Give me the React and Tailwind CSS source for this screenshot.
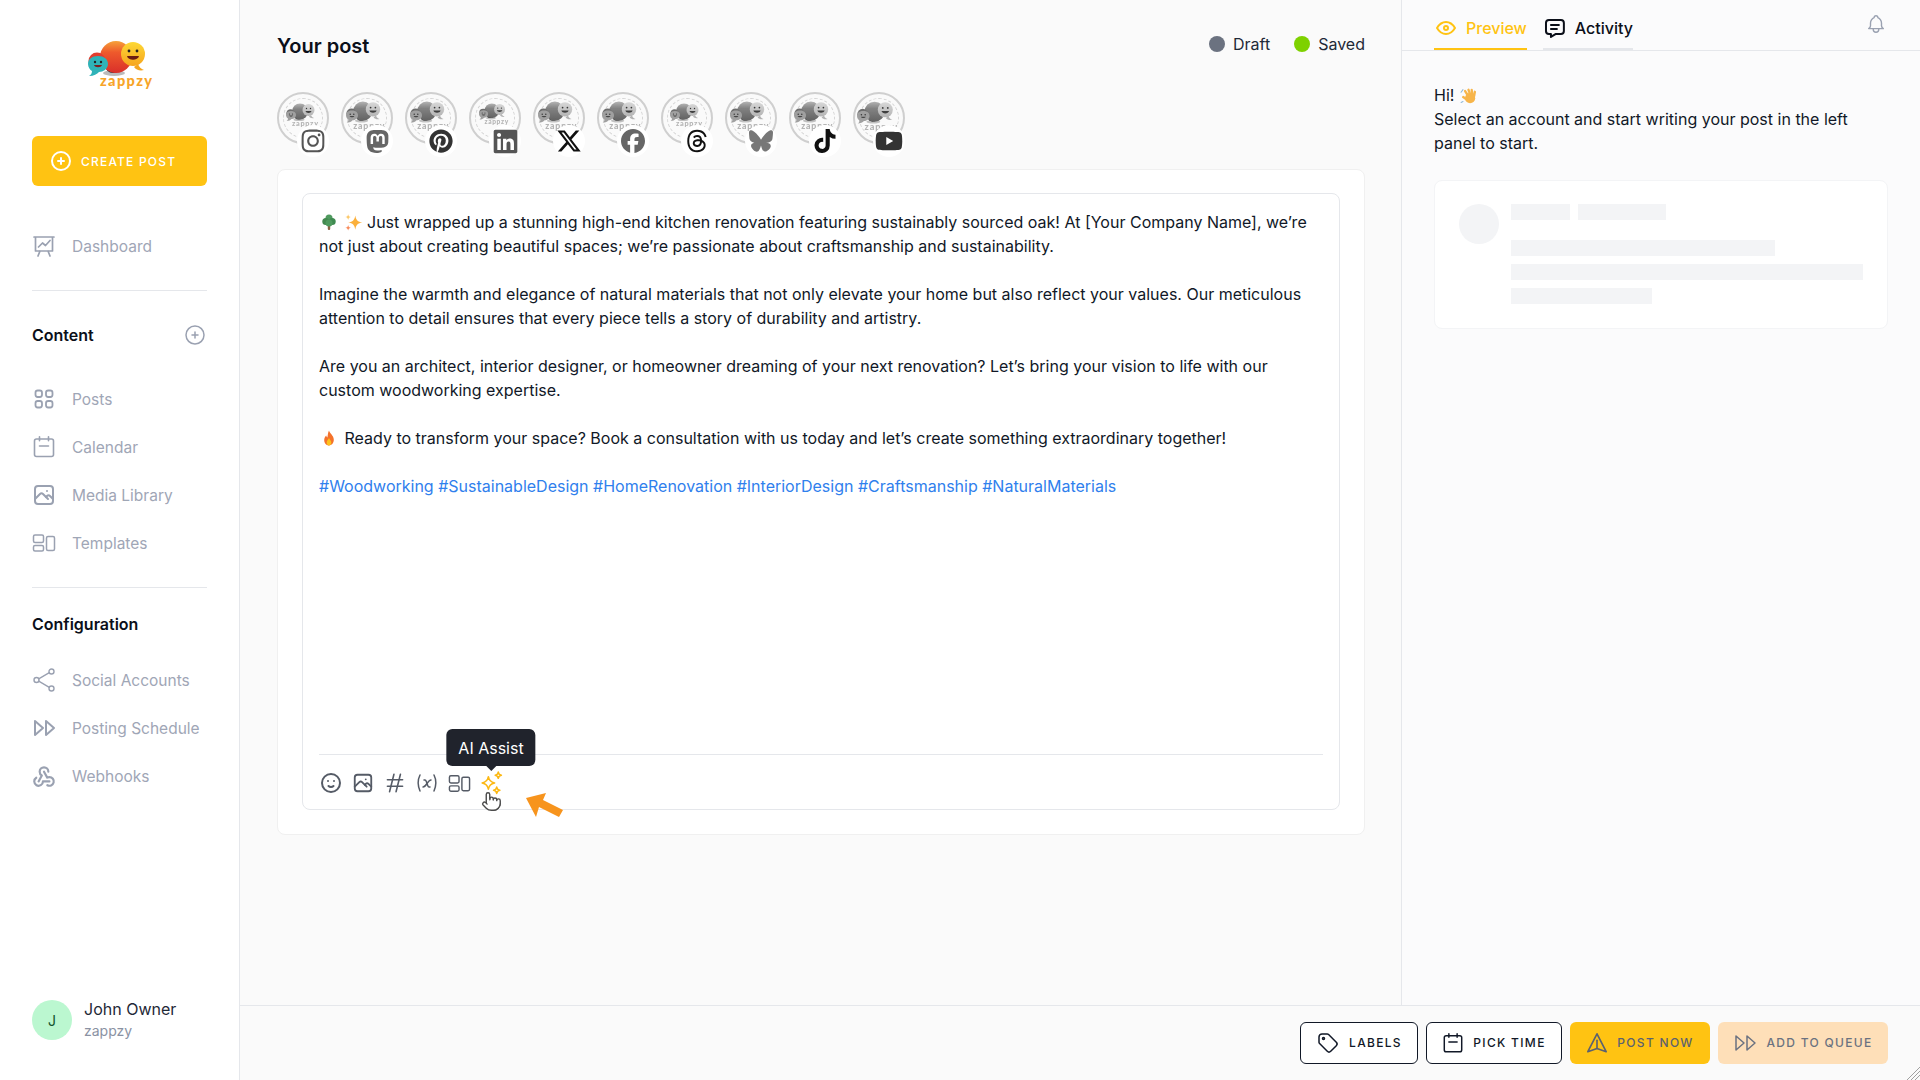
import {
  TbPhoto, TbPlayerTrackNext, TbWebhook,
  TbMoodSmile, TbHash, TbVariable, TbMessage, TbBell, TbEye, TbCirclePlus, TbTag,
} from 'react-icons/tb';
import { FaInstagram, FaPinterest, FaLinkedin, FaXTwitter, FaFacebook, FaThreads, FaBluesky, FaTiktok, FaYoutube } from 'react-icons/fa6';
import { SiMastodon } from 'react-icons/si';
import { Pointer } from 'lucide-react';

function Logo({ className }) {
  return (
    <svg viewBox="0 0 70 52" className={className}>
      <defs>
        <linearGradient id="zbig" x1="0" y1="0" x2="0" y2="1">
          <stop offset="0" stopColor="#f6a23a" />
          <stop offset="0.35" stopColor="#ee5a2c" />
          <stop offset="1" stopColor="#d92f2a" />
        </linearGradient>
        <linearGradient id="zyellow" x1="0" y1="0" x2="0" y2="1">
          <stop offset="0" stopColor="#fdd835" />
          <stop offset="1" stopColor="#f6a51e" />
        </linearGradient>
      </defs>
      <ellipse cx="26" cy="33" rx="11" ry="3" fill="#bbb" />
      <circle cx="25" cy="25" r="8" fill="#2b2b33" />
      <circle cx="28" cy="17" r="16" fill="url(#zbig)" />
      <circle cx="9" cy="21" r="8.5" fill="#e23d2f" />
      <path d="M0 24c0-5 4-8 10-8s10 3 10 8-5 8-9 8c-2 2-5 4-10 4 2-1 3-3 3-5-2-1-4-4-4-7z" fill="#2fb3b8" />
      <circle cx="7" cy="22" r="1.2" fill="#222" />
      <circle cx="13" cy="22" r="1.2" fill="#222" />
      <path d="M6 25h8c-1 3-7 3-8 0z" fill="#7a1f1f" />
      <path d="M50 24c1 3 3 5 6 6-4 1-8 0-10-3z" fill="#f4a51f" />
      <circle cx="45" cy="14" r="12" fill="url(#zyellow)" />
      <circle cx="41" cy="11" r="1.4" fill="#222" />
      <circle cx="49" cy="11" r="1.4" fill="#222" />
      <path d="M39 16h12c-1 5-11 5-12 0z" fill="#6b1b12" />
      <text x="12" y="46" fontFamily="Lato, sans-serif" fontWeight="900" fontSize="14.5" letterSpacing="1.4" fill="#f7a428">zappzy</text>
    </svg>
  );
}

function DashboardIcon({ className }) {
  return (
    <svg viewBox="0 0 24 24" fill="none" stroke="currentColor" strokeWidth="1.7" strokeLinecap="round" strokeLinejoin="round" className={className}>
      <path d="M2 3h20M3.500 3v14h17V3M8 17l-2 5M16 17l2 5M6.500 13l4-4 3 2.500 4.500-5" />
    </svg>
  );
}

function PostsIcon({ className }) {
  return (
    <svg viewBox="0 0 24 24" fill="none" stroke="currentColor" strokeWidth="1.8" className={className}>
      <rect x="3.500" y="3.500" width="6.500" height="6.500" rx="2.200" />
      <rect x="14" y="3.500" width="6.500" height="6.500" rx="2.200" />
      <rect x="3.500" y="14" width="6.500" height="6.500" rx="2.200" />
      <rect x="14" y="14" width="6.500" height="6.500" rx="2.200" />
    </svg>
  );
}

function ShareIcon({ className }) {
  return (
    <svg viewBox="0 0 24 24" fill="none" stroke="currentColor" strokeWidth="1.4" className={className}>
      <circle cx="4.500" cy="12" r="2.500" />
      <circle cx="19.500" cy="3.500" r="2.500" />
      <circle cx="19.500" cy="20.500" r="2.500" />
      <path d="M6.700 10.800 17.300 4.700M6.700 13.200l10.600 6.100" />
    </svg>
  );
}

function WebhookIcon() {
  return <TbWebhook className="w-[26px] h-[26px] -ml-[1px] text-[#9aa1b1]" />;
}

function CalendarIcon({ className }) {
  return (
    <svg viewBox="0 0 24 24" fill="none" stroke="currentColor" strokeWidth="1.6" strokeLinecap="round" strokeLinejoin="round" className={className}>
      <rect x="2.500" y="4" width="19" height="17.500" rx="2" />
      <path d="M7.500 1.800v4M16.500 1.800v4M7.500 11h9" />
    </svg>
  );
}

function TemplateIcon({ className }) {
  return (
    <svg viewBox="0 0 24 24" fill="none" stroke="currentColor" strokeWidth="1.5" strokeLinejoin="round" className={className}>
      <rect x="1.500" y="4" width="10" height="7.500" rx="1.500" />
      <rect x="1.500" y="14.500" width="10" height="5.500" rx="1.500" />
      <rect x="14.500" y="5.500" width="8" height="14" rx="1.500" />
    </svg>
  );
}

function SendIcon({ className }) {
  return (
    <svg viewBox="0 0 24 24" fill="none" stroke="currentColor" strokeWidth="1.8" strokeLinejoin="round" strokeLinecap="round" className={className}>
      <path d="M12 2 22 21.500 12 18 2 21.500z" />
      <path d="M12 9v9" />
    </svg>
  );
}

function Sparkles({ className }) {
  return (
    <svg viewBox="0 0 24 24" fill="none" stroke="#fcb813" strokeWidth="1.500" strokeLinejoin="round" className={className}>
      <path d="M9 5.500c.6 3.600 2.200 5.400 6 6-3.800.6-5.400 2.400-6 6-.6-3.600-2.200-5.400-6-6 3.800-.6 5.400-2.400 6-6z" />
      <path d="M18.500 1c.3 1.900 1.100 2.700 3 3-1.900.3-2.700 1.100-3 3-.3-1.900-1.100-2.700-3-3 1.900-.3 2.700-1.100 3-3z" />
      <path d="M17 15.500c.3 1.900 1.100 2.700 3 3-1.900.3-2.700 1.100-3 3-.3-1.900-1.100-2.700-3-3 1.900-.3 2.700-1.100 3-3z" />
    </svg>
  );
}

// small colour drawings standing in for the emoji of the post
function TreeEmoji() {
  return (
    <svg viewBox="0 0 16 16" className="inline-block mx-[2px] w-[16px] h-[16px] align-[-2px]">
      <rect x="6.800" y="10" width="2.400" height="6" rx="1" fill="#8a6242" />
      <circle cx="8" cy="4" r="3.500" fill="#4f9a5e" />
      <circle cx="4.800" cy="7.500" r="3.500" fill="#43894f" />
      <circle cx="11.200" cy="7.500" r="3.500" fill="#3f8a50" />
      <circle cx="8" cy="9" r="3.500" fill="#4f9a5e" />
    </svg>
  );
}

function SparkleEmoji() {
  return (
    <svg viewBox="0 0 16 16" className="inline-block w-[19px] h-[19px] align-[-4px]">
      <path d="M9.500 2c.7 4 2 5.300 6 6-4 .7-5.300 2-6 6-.7-4-2-5.300-6-6 4-.7 5.300-2 6-6z" fill="#fbb03b" />
      <path d="M3.500 1c.3 1.500.9 2.100 2.400 2.400-1.500.3-2.100.9-2.400 2.400-.3-1.500-.9-2.100-2.400-2.400C2.600 3.100 3.200 2.500 3.500 1z" fill="#fcc96b" />
      <path d="M3.500 10c.3 1.500.9 2.100 2.400 2.400-1.500.3-2.100.9-2.400 2.400-.3-1.500-.9-2.100-2.400-2.400 1.500-.3 2.100-.9 2.400-2.400z" fill="#f98d5e" />
    </svg>
  );
}

function FireEmoji() {
  return (
    <svg viewBox="0 0 16 16" className="inline-block ml-[2px] mr-[3px] w-[16px] h-[16px] align-[-2px]">
      <path d="M8 .5c.5 3 4.800 4.800 4.800 9.300 0 3.500-2.300 5.700-4.800 5.700s-4.800-2.200-4.800-5.500c0-2.200 1.200-3.500 2-4.500.2 1 .6 1.700 1.200 2C6.800 5 7 2.500 8 .5z" fill="#f4722b" />
      <path d="M8 8c.3 1.500 2.300 2.500 2.300 4.500 0 1.700-1 3-2.300 3s-2.300-1.300-2.300-3C5.700 10.500 7.500 9.500 8 8z" fill="#fcc21b" />
    </svg>
  );
}

function WaveEmoji() {
  return (
    <svg viewBox="0 0 16 16" className="inline-block ml-[1px] w-[17px] h-[17px] align-[-3px]">
      <circle cx="9.500" cy="10.500" r="4.800" fill="#f7b54a" />
      <path d="M7.500 8 4.800 3.800M9.500 7 8 2.600M11.500 7 11 2.800M13.300 8.500 14 4.500M6 11.500 3 9.500" stroke="#f7b54a" strokeWidth="2.200" fill="none" strokeLinecap="round" />
      <path d="M1 5 2.800 2.500M1 14.500l1.800-.8" stroke="#8fb8d8" strokeWidth="1" fill="none" strokeLinecap="round" />
    </svg>
  );
}

function NavItem({ icon: Icon, label }) {
  return (
    <div className="flex items-center h-[48px] text-[#9fa6b6]">
      <div className="w-[40px] flex-shrink-0"><Icon className="w-[24px] h-[24px] text-[#9aa1b1]" /></div>
      <span className="text-[15.5px] leading-none pt-[2px]">{label}</span>
    </div>
  );
}

const accounts = [
  { icon: FaInstagram, color: 'text-[#555555]', logo: 'w-[35px] mt-[-4px]', size: 'text-[26px]' },
  { icon: SiMastodon, color: 'text-[#666666]', logo: 'w-[42px] mt-[-2px]', size: 'text-[23px]' },
  { icon: FaPinterest, color: 'text-[#333333]', logo: 'w-[42px] mt-[-2px]', size: 'text-[24px]' },
  { icon: FaLinkedin, color: 'text-[#555555]', logo: 'w-[32px] mt-[-6px]', size: 'text-[27px]' },
  { icon: FaXTwitter, color: 'text-[#111111]', logo: 'w-[42px] mt-[-2px]', size: 'text-[26px]' },
  { icon: FaFacebook, color: 'text-[#666666]', logo: 'w-[42px] mt-[-2px]', size: 'text-[24px]' },
  { icon: FaThreads, color: 'text-[#111111]', logo: 'w-[35px] mt-[-4px]', size: 'text-[24px]' },
  { icon: FaBluesky, color: 'text-[#777777]', logo: 'w-[42px] mt-[-2px]', size: 'text-[24px]' },
  { icon: FaTiktok, color: 'text-[#111111]', logo: 'w-[42px] mt-[-2px]', size: 'text-[24px]' },
  { icon: FaYoutube, color: 'text-[#333333]', logo: 'w-[44px] mt-[-2px]', size: 'text-[28px]' },
];

function Account({ icon: Icon, color, logo, size }) {
  return (
    <div className="relative w-[52px] h-[52px] rounded-full border-2 border-[#cfcfcf] flex items-center justify-center">
      <div className="absolute inset-[4px] rounded-full border border-dashed border-[#d5d5d5]" />
      <Logo className={`${logo} grayscale opacity-90`} />
      <div className={`absolute left-[18px] top-[31px] w-[32px] h-[32px] rounded-full bg-white flex items-center justify-center ${color} ${size}`}>
        <Icon />
      </div>
    </div>
  );
}

function FooterButton({ className, children }) {
  return (
    <div className={`h-[42px] rounded-[6px] flex items-center justify-center gap-[9px] text-[12px] font-medium tracking-[0.11em] ${className}`}>
      {children}
    </div>
  );
}

export default function App() {
  return (
    <div className="h-screen w-full flex bg-[#fafafa] text-[#111827] overflow-hidden font-['Inter',sans-serif]">
      {/* Sidebar */}
      <aside className="w-[240px] flex-shrink-0 bg-white border-r border-[#e5e7eb] px-[32px] flex flex-col">
        <div className="pt-[40px] h-[136px] flex justify-center">
          <Logo className="w-[70px] h-[52px] ml-[6px]" />
        </div>
        <div className="h-[50px] rounded-[6px] bg-[#ffc312] flex items-center pl-[17px] text-white flex-shrink-0">
          <TbCirclePlus className="w-[24px] h-[24px]" />
          <span className="ml-[8px] pt-[1px] text-[12px] font-medium tracking-[0.1em]">CREATE POST</span>
        </div>
        <div className="mt-[36px]"><NavItem icon={DashboardIcon} label="Dashboard" /></div>
        <div className="mt-[20px] border-t border-[#e5e7eb]" />
        <div className="mt-[32px] flex items-center justify-between h-[24px]">
          <span className="text-[16px] font-semibold text-[#0b0f19]">Content</span>
          <TbCirclePlus className="w-[24px] h-[24px] text-[#9aa1b1]" strokeWidth={1.5} />
        </div>
        <div className="mt-[28px]">
          <NavItem icon={PostsIcon} label="Posts" />
          <NavItem icon={CalendarIcon} label="Calendar" />
          <NavItem icon={TbPhoto} label="Media Library" />
          <NavItem icon={TemplateIcon} label="Templates" />
        </div>
        <div className="mt-[20px] border-t border-[#e5e7eb]" />
        <div className="mt-[24px] h-[24px] flex items-center text-[16px] font-semibold text-[#0b0f19]">Configuration</div>
        <div className="mt-[20px]">
          <NavItem icon={ShareIcon} label="Social Accounts" />
          <NavItem icon={TbPlayerTrackNext} label="Posting Schedule" />
          <NavItem icon={WebhookIcon} label="Webhooks" />
        </div>
        <div className="mt-auto mb-[38px] flex items-center">
          <div className="w-[40px] h-[40px] rounded-full bg-[#bbf7d0] flex items-center justify-center text-[14px] text-[#14532d]">J</div>
          <div className="ml-[12px]">
            <div className="text-[16px] leading-[22px] text-[#1f2937]">John Owner</div>
            <div className="text-[14px] leading-[22px] text-[#8a92a3]">zappzy</div>
          </div>
        </div>
      </aside>

      <div className="flex-1 min-w-0 flex flex-col">
        <div className="flex-1 min-h-0 flex">
          {/* Editor column */}
          <main className="w-[1161px] flex-shrink-0 pl-[37px] pr-[36px] pt-[32px] flex flex-col">
            <div className="flex items-center justify-between h-[28px]">
              <h1 className="text-[20px] font-semibold text-[#0b0f19]">Your post</h1>
              <div className="flex items-center text-[16px] text-[#1f2937] -mt-[4px]">
                <span className="w-[16px] h-[16px] rounded-full bg-[#6b7280]" />
                <span className="ml-[8px]">Draft</span>
                <span className="ml-[24px] w-[16px] h-[16px] rounded-full bg-[#7ed100]" />
                <span className="ml-[8px]">Saved</span>
              </div>
            </div>
            <div className="mt-[32px] flex gap-[12px] h-[52px]">
              {accounts.map((a, i) => <Account key={i} {...a} />)}
            </div>

            <div className="mt-[25px] h-[666px] bg-white border border-[#f0f0f0] rounded-[8px] px-[24px] pt-[23px] pb-[24px]">
              <div className="h-full border border-[#e5e7eb] rounded-[8px] px-[16px] flex flex-col">
                <div className="flex-1 pt-[16px] text-[16px] leading-[24px] text-[#111827]">
                  <p><TreeEmoji /> <SparkleEmoji /> Just wrapped up a stunning high-end kitchen renovation featuring sustainably sourced oak! At [Your Company Name], we’re not just about creating beautiful spaces; we’re passionate about craftsmanship and sustainability.</p>
                  <p className="mt-[24px]">Imagine the warmth and elegance of natural materials that not only elevate your home but also reflect your values. Our meticulous attention to detail ensures that every piece tells a story of durability and artistry.</p>
                  <p className="mt-[24px]">Are you an architect, interior designer, or homeowner dreaming of your next renovation? Let’s bring your vision to life with our custom woodworking expertise.</p>
                  <p className="mt-[24px]"><FireEmoji /> Ready to transform your space? Book a consultation with us today and let’s create something extraordinary together!</p>
                  <p className="mt-[24px] text-[#2f80ed]">#Woodworking #SustainableDesign #HomeRenovation #InteriorDesign #Craftsmanship #NaturalMaterials</p>
                </div>
                <div className="h-[55px] pt-[2px] border-t border-[#e5e7eb] flex items-center text-[#555b66]">
                  <div className="w-[24px] flex justify-center"><TbMoodSmile className="w-[24px] h-[24px]" /></div>
                  <div className="w-[32px] ml-[4px] flex justify-center"><TbPhoto className="w-[22px] h-[22px]" /></div>
                  <div className="w-[32px] flex justify-center"><TbHash className="w-[26px] h-[26px]" strokeWidth={1.5} /></div>
                  <div className="w-[32px] flex justify-center"><TbVariable className="w-[24px] h-[24px]" strokeWidth={1.5} /></div>
                  <div className="w-[32px] flex justify-center"><TemplateIcon className="w-[23px] h-[23px]" /></div>
                  <div className="relative w-[32px] flex justify-center">
                    <Sparkles className="w-[25px] h-[25px]" />
                    {/* tooltip */}
                    <div className="absolute left-1/2 -translate-x-1/2 bottom-[30px] h-[37px] px-[12px] pt-[1px] rounded-[6px] bg-[#20232c] text-white text-[16px] flex items-center whitespace-nowrap">
                      AI Assist
                      <span className="absolute left-1/2 -translate-x-1/2 top-full w-0 h-0 border-x-[5px] border-x-transparent border-t-[5px] border-t-[#20232c]" />
                    </div>
                    <Pointer className="absolute left-[6px] top-[20px] w-[21px] h-[21px] text-[#4b4b4b] fill-white" strokeWidth={1.6} />
                    {/* orange arrow */}
                    <svg viewBox="0 0 38 27" className="absolute left-[51px] top-[21px] w-[38px] h-[27px]">
                      <polygon points="0,6 20,1 17,8 37,18 33,25 13,15 10,25" fill="#f7941d" />
                    </svg>
                  </div>
                </div>
              </div>
            </div>
          </main>

          {/* Preview column */}
          <section className="flex-1 min-w-0 border-l border-[#e5e7eb] bg-[#fbfbfc]">
            <div className="h-[51px] border-b border-[#e5e7eb] pl-[32px] pr-[33px] flex items-start">
              <div className="w-[93px] h-[50px] border-b-2 border-[#ffc312] flex items-center text-[#ffc312] text-[16px] font-medium pt-[8px]">
                <TbEye className="w-[24px] h-[24px] mr-[8px]" />
                Preview
              </div>
              <div className="ml-[16px] w-[90px] h-[50px] border-b-2 border-[#e5e7eb] flex items-center text-[#0b0f19] text-[16px] font-medium pt-[8px]">
                <TbMessage className="w-[24px] h-[24px] mr-[8px]" />
                Activity
              </div>
              <TbBell className="ml-auto mt-[13px] w-[22px] h-[22px] text-[#9aa1b1]" strokeWidth={1.5} />
            </div>
            <div className="px-[32px] pt-[32px]">
              <p className="text-[16px] leading-[24px] text-[#111827]">
                Hi! <WaveEmoji /><br />
                Select an account and start writing your post in the left panel to start.
              </p>
              <div className="mt-[25px] h-[149px] w-[454px] bg-white border border-[#f3f4f6] rounded-[8px] pl-[24px] pt-[23px] flex">
                <div className="w-[40px] h-[40px] rounded-full bg-[#f3f4f6] flex-shrink-0" />
                <div className="ml-[12px]">
                  <div className="flex gap-[8px]">
                    <div className="w-[59px] h-[16px] bg-[#f3f4f6]" />
                    <div className="w-[88px] h-[16px] bg-[#f3f4f6]" />
                  </div>
                  <div className="mt-[20px] w-[264px] h-[16px] bg-[#f3f4f6]" />
                  <div className="mt-[8px] w-[352px] h-[16px] bg-[#f3f4f6]" />
                  <div className="mt-[8px] w-[141px] h-[16px] bg-[#f3f4f6]" />
                </div>
              </div>
            </div>
          </section>
        </div>

        {/* Footer */}
        <footer className="relative h-[75px] flex-shrink-0 border-t border-[#e5e7eb] flex items-center justify-end gap-[8px] pr-[32px] pb-[1px]">
          <FooterButton className="w-[118px] bg-white border border-[#111827] text-[#111827]">
            <TbTag className="w-[24px] h-[24px]" strokeWidth={1.5} />
            LABELS
          </FooterButton>
          <FooterButton className="w-[136px] bg-white border border-[#111827] text-[#111827]">
            <CalendarIcon className="w-[22px] h-[22px]" />
            PICK TIME
          </FooterButton>
          <FooterButton className="w-[140px] bg-[#ffc312] text-[#5b6170]">
            <SendIcon className="w-[22px] h-[22px]" />
            POST NOW
          </FooterButton>
          <FooterButton className="w-[170px] bg-[#fedfb8] text-[#6b7280]">
            <TbPlayerTrackNext className="w-[24px] h-[24px]" strokeWidth={1.5} />
            ADD TO QUEUE
          </FooterButton>
          <svg viewBox="0 0 14 14" className="absolute right-0 bottom-0 w-[14px] h-[14px]" stroke="#a0a0a0" strokeWidth="1">
            <path d="M14 1 1 14M14 5 5 14M14 9 9 14" />
          </svg>
        </footer>
      </div>
    </div>
  );
}
